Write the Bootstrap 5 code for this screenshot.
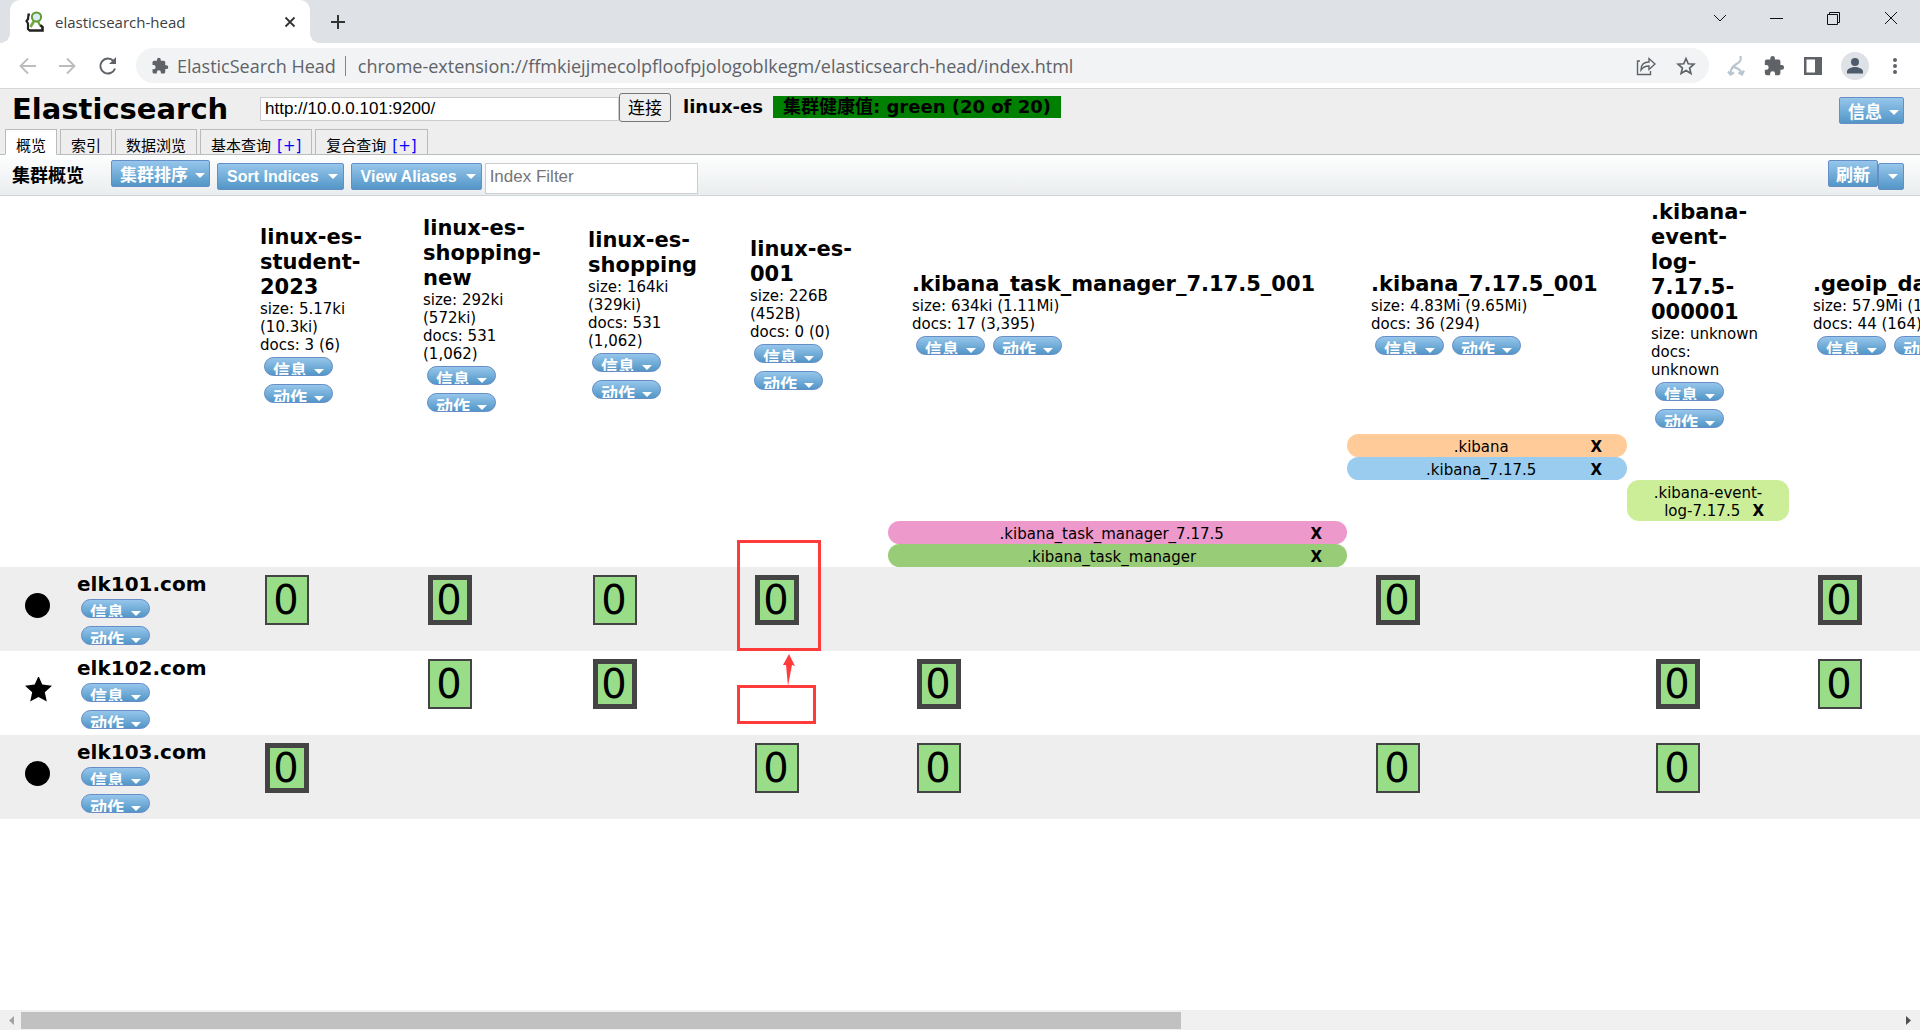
<!DOCTYPE html>
<html lang="zh-CN">
<head>
<meta charset="utf-8">
<meta name="viewport" content="width=device-width, initial-scale=1">
<title>elasticsearch-head</title>
<link href="https://cdn.jsdelivr.net/npm/bootstrap@5.3.0/dist/css/bootstrap.min.css" rel="stylesheet">
<style>
  body { font-family: "DejaVu Sans", "Noto Sans CJK SC", sans-serif; font-size: 15px; line-height: 18px; color: #000; background: #fff; overflow: hidden; }
  svg { display: block; flex: none; }
  .chrome-font { font-family: "Open Sans", "Noto Sans CJK SC", sans-serif; }
  .icon-btn { background: none; border: 0; padding: 0; color: #5f6368; display: flex; }

  /* browser frame */
  .tabstrip { background: #dee1e6; height: 43px; padding-left: 10px; }
  .browser-tab { position: relative; width: 300px; height: 43px; background: #fff; border-radius: 10px 10px 0 0; padding: 0 13px 0 15px; color: #3c4043; font-size: 15px; }
  .browser-tab::before, .browser-tab::after { content: ""; position: absolute; bottom: 0; width: 10px; height: 10px; }
  .browser-tab::before { right: 100%; background: radial-gradient(circle at 0 0, transparent 10px, #fff 10px); }
  .browser-tab::after { left: 100%; background: radial-gradient(circle at 100% 0, transparent 10px, #fff 10px); }
  .browser-tab svg { margin-right: 10px; }
  .browser-tab .icon-btn svg { margin: 0; }
  .win-buttons { gap: 41px; padding-right: 21px; }
  .win-buttons .icon-btn { color: #111; }
  .addressbar { height: 46px; padding: 5px 17px 5px 18px; border-bottom: 1px solid #d5d7da; gap: 18px; }
  .nav-icons { gap: 20px; }
  .omnibox { background: #f1f3f4; border-radius: 18px; height: 35px; padding: 0 13px 0 15px; color: #5f6368; font-size: 18px; }
  .omnibox .sep { width: 1px; height: 20px; background: #80868b; margin: 0 12px 0 9px; }
  .avatar { width: 28px; height: 28px; border-radius: 50%; background: #dee1e6; overflow: hidden; }

  /* page header */
  .page-head { background: #eee; border-bottom: 1px solid #bbb; height: 66px; }
  .page-head h1 { font-size: 29px; line-height: 36px; font-weight: bold; margin: 0; padding: 2px 0 0 12px; width: 260px; }
  .uri-box { width: 359px; height: 24px; border: 1px solid #ccc; padding: 1px 4px; font: 17px/20px "Liberation Sans", sans-serif; color: #000; background: #fff; }
  .connect { height: 29px; border: 1px solid #767676; border-radius: 3px; background: #efefef; padding: 0 8px; font-size: 17px; line-height: 20px; color: #000; }
  .cluster-name, .health { font-size: 18px; font-weight: bold; line-height: 22px; margin-top: 7px; }
  .cluster-name { margin-left: 12px; }
  .health { background: green; padding: 0 10px; margin-left: 10px; }
  .view-tabs { padding-left: 5px; gap: 3px; margin-bottom: -1px; }
  .view-tabs .tab-item { border: 1px solid #bbb; background: #eee; padding: 4px 10px 0; height: 26px; font-size: 15px; line-height: 24px; overflow: hidden; display: flex; gap: 6px; }
  .view-tabs .tab-item.current { background: #fff; border-bottom-color: #fff; }
  .view-tabs a { color: #000; text-decoration: none; }
  .view-tabs a.plus { color: #00f; }

  /* blue buttons */
  .ui-btn { border: 1px solid #668dc6; border-radius: 2px; color: #fff; font: bold 17px/22px "Liberation Sans", "Noto Sans CJK SC", sans-serif; background: linear-gradient(#96c6eb, #5296c7); height: 27px; padding: 4px 8px 0; display: inline-flex; align-items: center; gap: 7px; white-space: nowrap; overflow: hidden; }
  .ui-btn::after { content: ""; flex: none; border: 5px solid transparent; border-top-color: #fff; border-bottom: 0; margin-right: -4px; }
  .ui-btn.latin { font-size: 16px; gap: 9px; padding: 0 9px; margin-left: 7px; }
  .ui-btn.no-caret { padding: 4px 7px 0; }
  .ui-btn.no-caret::after { display: none; }
  .ui-btn.only-caret { padding: 0 9px; width: 26px; }
  .ui-btn.only-caret::after { margin: 0; }
  .ui-btn.pill { border-radius: 10px; width: 69px; height: 19px; padding: 10px 14px 0 8px; line-height: 17px; margin: 3px 4px 5px; }

  .toolbar { height: 41px; border-bottom: 1px solid #ced5d9; background: linear-gradient(#fdfefe, #eaedef); padding: 5px 16px 0 12px; }
  .toolbar h2 { font-size: 18px; line-height: 32px; font-weight: bold; margin: 0; width: 99px; }
  .lower { margin-top: 3px; }
  .filter { width: 213px; height: 31px; border: 1px solid #ccc; padding: 0 4px 4px; font: 17px/20px "Liberation Sans", sans-serif; margin-left: 3px; }
  .filter::placeholder { color: #757575; }

  /* cluster grid */
  .grid-wrap { overflow: hidden; }
  .cluster { table-layout: fixed; width: 2200px; border-collapse: collapse; }
  .cluster th, .cluster td { padding: 0; font-weight: normal; text-align: left; }
  .cluster .idx { padding: 2px 24px 0; vertical-align: middle; height: 238px; white-space: nowrap; }
  .cluster .narrow { white-space: normal; padding-right: 27px; }
  .idx h3, .node-name { font-size: 20px; line-height: 25px; font-weight: bold; margin: 0; }
  .idx h3 { font-size: 21px; }
  .btn-set { display: flex; flex-wrap: wrap; }
  .alias { border-radius: 12px; padding: 4px 25px 1px; text-align: center; min-height: 23px; }
  .alias-x { float: right; border: 0; background: none; padding: 0; font-weight: bold; line-height: 18px; color: #000; }
  .a1 { background: #fc9; } .a2 { background: #9ce; } .a3 { background: #ce9; } .a4 { background: #e9c; } .a5 { background: #9c7; }
  .cluster tbody tr { height: 84px; }
  .cluster tbody tr:nth-child(odd) { background: #eee; }
  .cluster tbody td { vertical-align: top; padding: 8px 0 0 29px; }
  .cluster tbody .marker { padding: 26px 0 0 25px; }
  .cluster tbody .node { padding: 5px 0 0; }
  .node .btn-set { flex-direction: column; }
  .node .pill { margin: 2px 4px 6px; }
  .replica { width: 44px; height: 50px; border: 2px solid #444; background: #9d8; font-size: 40px; line-height: 46px; padding: 0 2px 0 0; display: flex; align-items: center; justify-content: center; color: #000; }
  .replica.primary { border-width: 5px; }

  /* red annotation marks lying over the grid */
  .note { position: absolute; border: 3px solid #ff3b3b; pointer-events: none; }
  .note-a { left: 737px; top: 344px; width: 84px; height: 111px; }
  .note-b { left: 737px; top: 489px; width: 79px; height: 39px; }
  .note-arrow { position: absolute; left: 783px; top: 458px; }

  .hscroll { height: 20px; background: #f0f0f0; padding: 0 9px; }
  .thumb { width: 61%; height: 17px; background: #c1c1c1; margin: 0 auto 0 7px; }
</style>
</head>
<body>
<div class="d-flex flex-column vh-100">
  <header class="chrome-font">
    <div class="tabstrip d-flex">
      <div class="browser-tab d-flex align-items-center">
        <svg width="20" height="22" viewBox="0 0 20 22" fill="none"><path d="M5 3.500H3.500L3 8l-1.500 2L3 12.500V18l1.500 1.500" stroke="#222" stroke-width="2.200"/><path d="M4 19.500h13.500V16l-2.500-2" stroke="#222" stroke-width="2.600"/><circle cx="11.500" cy="6" r="4.600" fill="#dcebfa" stroke="#5f9b32" stroke-width="2"/><path d="M9 10l-3.500 6" stroke="#6faa3c" stroke-width="2.600"/><path d="M13 10.500l2 4" stroke="#5f9b32" stroke-width="2"/></svg>
        <span class="flex-grow-1">elasticsearch-head</span>
        <button class="icon-btn" aria-label="Close tab"><svg width="14" height="14" viewBox="0 0 14 14"><path d="M2.500 2.500l9 9m0-9l-9 9" stroke="#333" stroke-width="1.800"/></svg></button>
      </div>
      <button class="icon-btn align-items-center ms-3 ps-1" aria-label="New tab"><svg width="16" height="16" viewBox="0 0 16 16"><path d="M8 1v14M1 8h14" stroke="#333" stroke-width="2"/></svg></button>
      <div class="win-buttons d-flex align-items-center ms-auto pb-2">
        <button class="icon-btn" aria-label="Search tabs"><svg width="16" height="16" viewBox="0 0 16 16"><path d="M2 5l6 6 6-6" fill="none" stroke="currentColor"/></svg></button>
        <button class="icon-btn" aria-label="Minimize"><svg width="16" height="16" viewBox="0 0 16 16"><path d="M1 8.500h13" stroke="currentColor"/></svg></button>
        <button class="icon-btn" aria-label="Restore"><svg width="16" height="16" viewBox="0 0 16 16"><path d="M1.500 4.500h10v10h-10zM3.500 4V2.500h10v10H12" fill="none" stroke="currentColor"/></svg></button>
        <button class="icon-btn" aria-label="Close"><svg width="16" height="16" viewBox="0 0 16 16"><path d="M2 2l12 12m0-12L2 14" stroke="currentColor"/></svg></button>
      </div>
    </div>
    <div class="addressbar d-flex align-items-center">
      <div class="nav-icons d-flex">
        <button class="icon-btn" aria-label="Back"><svg width="20" height="20" viewBox="0 0 20 20"><path d="M18 10H2.500M10 2.500L2.500 10l7.500 7.500" fill="none" stroke="#babcbe" stroke-width="1.800"/></svg></button>
        <button class="icon-btn" aria-label="Forward"><svg width="20" height="20" viewBox="0 0 20 20"><path d="M1 10h15.500M9 2.500l7.500 7.500L9 17.500" fill="none" stroke="#babcbe" stroke-width="1.800"/></svg></button>
        <button class="icon-btn" aria-label="Reload"><svg width="20" height="20" viewBox="0 0 20 20"><path d="M17 12.500A7.500 7.500 0 1 1 15.500 5" fill="none" stroke="#5f6368" stroke-width="2"/><path d="M18 1v7h-7z" fill="#5f6368"/></svg></button>
      </div>
      <div class="omnibox d-flex align-items-center flex-grow-1">
        <svg class="me-2" width="18" height="18" viewBox="0 0 24 24"><path d="M20.500 11H19V7a2 2 0 0 0-2-2h-4V3.500a2.500 2.500 0 0 0-5 0V5H4a2 2 0 0 0-2 2v3.800h1.500a2.700 2.700 0 0 1 0 5.400H2V20a2 2 0 0 0 2 2h3.800v-1.500a2.700 2.700 0 0 1 5.400 0V22H17a2 2 0 0 0 2-2v-4h1.500a2.500 2.500 0 0 0 0-5z" fill="#5f6368"/></svg>
        <span>ElasticSearch Head</span><span class="sep"></span><span class="flex-grow-1">chrome-extension://ffmkiejjmecolpfloofpjologoblkegm/elasticsearch-head/index.html</span>
        <button class="icon-btn me-3 pe-1" aria-label="Share"><svg width="20" height="20" viewBox="0 0 20 20" fill="none" stroke="#5f6368" stroke-width="1.400"><path d="M4 5H1.500v13.500h13V15"/><path d="M5 14c0-5 3-8 8-8V2.500l6 5.500-6 5.500V10c-4 0-6 1-8 4z"/></svg></button>
        <button class="icon-btn" aria-label="Bookmark"><svg width="20" height="20" viewBox="0 0 24 24"><path d="M12 3l2.700 6.300 6.800.6-5.200 4.500 1.600 6.700-5.900-3.600-5.900 3.600 1.600-6.700-5.200-4.500 6.800-.6z" fill="none" stroke="#5f6368" stroke-width="2"/></svg></button>
      </div>
      <button class="icon-btn" aria-label="Extension"><svg width="18" height="22" viewBox="0 0 18 22" fill="none" stroke="#b9c6d2" stroke-width="2.200"><path d="M13.500 1c1 5-1 6-4 8s-6 4-6 10M6 12c5 1 8 3 9 7"/><path d="M1 16.500l2.500 3 3.500-2M11.500 17.500l3.500 2 2-4"/></svg></button>
      <button class="icon-btn" aria-label="Extensions"><svg width="22" height="22" viewBox="0 0 24 24"><path d="M20.500 11H19V7a2 2 0 0 0-2-2h-4V3.500a2.500 2.500 0 0 0-5 0V5H4a2 2 0 0 0-2 2v3.800h1.500a2.700 2.700 0 0 1 0 5.400H2V20a2 2 0 0 0 2 2h3.800v-1.500a2.700 2.700 0 0 1 5.400 0V22H17a2 2 0 0 0 2-2v-4h1.500a2.500 2.500 0 0 0 0-5z" fill="#5f6368"/></svg></button>
      <button class="icon-btn" aria-label="Side panel"><svg width="20" height="20" viewBox="0 0 20 20"><path d="M1 1h18v18H1zM3.500 3.500v13h8.500v-13z" fill="#5f6368" fill-rule="evenodd"/></svg></button>
      <button class="icon-btn avatar" aria-label="Profile"><svg width="28" height="28" viewBox="0 0 28 28" fill="#4d5b6c"><circle cx="14" cy="10" r="4"/><path d="M6 21.500v-2c0-3 5-4.500 8-4.500s8 1.500 8 4.500v2z"/></svg></button>
      <button class="icon-btn" aria-label="Menu"><svg width="16" height="18" viewBox="0 0 16 18" fill="#5f6368"><circle cx="8" cy="3" r="2"/><circle cx="8" cy="9" r="2"/><circle cx="8" cy="15" r="2"/></svg></button>
    </div>
  </header>

  <section class="page-head d-flex flex-column justify-content-between">
    <div class="d-flex align-items-start pe-3">
      <h1>Elasticsearch</h1>
      <form class="d-flex align-items-start pt-1" onsubmit="return false">
        <input class="uri-box mt-1" type="text" value="http://10.0.0.101:9200/" aria-label="URI">
        <button class="connect" type="submit">连接</button>
      </form>
      <span class="cluster-name">linux-es</span>
      <span class="health">集群健康值: green (20 of 20)</span>
      <button class="ui-btn ms-auto mt-2">信息</button>
    </div>
    <nav class="view-tabs d-flex">
      <div class="tab-item current"><a href="#">概览</a></div>
      <div class="tab-item"><a href="#">索引</a></div>
      <div class="tab-item"><a href="#">数据浏览</a></div>
      <div class="tab-item"><a href="#">基本查询</a><a class="plus" href="#">[+]</a></div>
      <div class="tab-item"><a href="#">复合查询</a><a class="plus" href="#">[+]</a></div>
    </nav>
  </section>

  <section class="toolbar d-flex align-items-start">
    <h2>集群概览</h2>
    <button class="ui-btn">集群排序</button>
    <button class="ui-btn latin lower">Sort Indices</button>
    <button class="ui-btn latin lower">View Aliases</button>
    <input class="filter lower" type="text" placeholder="Index Filter" aria-label="Index Filter">
    <button class="ui-btn no-caret ms-auto">刷新</button>
    <button class="ui-btn only-caret lower" aria-label="刷新选项"></button>
  </section>

  <main class="grid-wrap flex-grow-1 position-relative">
    <table class="cluster">
      <colgroup>
        <col style="width:77px"><col style="width:159px"><col style="width:163px"><col style="width:165px"><col style="width:162px"><col style="width:162px"><col style="width:459px"><col style="width:280px"><col style="width:162px"><col>
      </colgroup>
      <thead>
        <tr>
          <th colspan="2"></th>
          <th class="idx narrow"><h3>linux-es-student-2023</h3><div>size: 5.17ki (10.3ki)</div><div>docs: 3 (6)</div><div class="btn-set"><button class="ui-btn pill">信息</button><button class="ui-btn pill">动作</button></div></th>
          <th class="idx narrow"><h3>linux-es-shopping-new</h3><div>size: 292ki (572ki)</div><div>docs: 531 (1,062)</div><div class="btn-set"><button class="ui-btn pill">信息</button><button class="ui-btn pill">动作</button></div></th>
          <th class="idx narrow"><h3>linux-es-shopping</h3><div>size: 164ki (329ki)</div><div>docs: 531 (1,062)</div><div class="btn-set"><button class="ui-btn pill">信息</button><button class="ui-btn pill">动作</button></div></th>
          <th class="idx narrow"><h3>linux-es-001</h3><div>size: 226B (452B)</div><div>docs: 0 (0)</div><div class="btn-set"><button class="ui-btn pill">信息</button><button class="ui-btn pill">动作</button></div></th>
          <th class="idx"><h3>.kibana_task_manager_7.17.5_001</h3><div>size: 634ki (1.11Mi)</div><div>docs: 17 (3,395)</div><div class="btn-set"><button class="ui-btn pill">信息</button><button class="ui-btn pill">动作</button></div></th>
          <th class="idx"><h3>.kibana_7.17.5_001</h3><div>size: 4.83Mi (9.65Mi)</div><div>docs: 36 (294)</div><div class="btn-set"><button class="ui-btn pill">信息</button><button class="ui-btn pill">动作</button></div></th>
          <th class="idx narrow"><h3>.kibana-event-log-7.17.5-000001</h3><div>size: unknown</div><div>docs: unknown</div><div class="btn-set"><button class="ui-btn pill">信息</button><button class="ui-btn pill">动作</button></div></th>
          <th class="idx"><h3>.geoip_databases</h3><div>size: 57.9Mi (116Mi)</div><div>docs: 44 (164)</div><div class="btn-set"><button class="ui-btn pill">信息</button><button class="ui-btn pill">动作</button></div></th>
        </tr>
        <tr><th colspan="7"></th><th><div class="alias a1"><button class="alias-x">X</button>.kibana</div></th><th colspan="2"></th></tr>
        <tr><th colspan="7"></th><th><div class="alias a2"><button class="alias-x">X</button>.kibana_7.17.5</div></th><th colspan="2"></th></tr>
        <tr><th colspan="8"></th><th><div class="alias a3">.kibana-event-log-7.17.5<button class="alias-x">X</button></div></th><th></th></tr>
        <tr><th colspan="6"></th><th><div class="alias a4"><button class="alias-x">X</button>.kibana_task_manager_7.17.5</div></th><th colspan="3"></th></tr>
        <tr><th colspan="6"></th><th><div class="alias a5"><button class="alias-x">X</button>.kibana_task_manager</div></th><th colspan="3"></th></tr>
      </thead>
      <tbody>
        <tr>
          <td class="marker"><svg width="26" height="26" viewBox="0 0 26 26"><circle cx="12.500" cy="12.500" r="12.500"/></svg></td>
          <td class="node"><div class="node-name">elk101.com</div><div class="btn-set"><button class="ui-btn pill">信息</button><button class="ui-btn pill">动作</button></div></td>
          <td><button class="replica">0</button></td><td><button class="replica primary">0</button></td><td><button class="replica">0</button></td><td><button class="replica primary">0</button></td><td></td><td><button class="replica primary">0</button></td><td></td><td><button class="replica primary">0</button></td>
        </tr>
        <tr>
          <td class="marker"><svg width="28" height="26" viewBox="0 1 28 26"><path d="M13.500 0l3.800 8.500 9.700 1.200-7.200 6.500 2 9.300-8.300-4.500-8.300 4.500 2-9.300L0 9.700l9.700-1.200z"/></svg></td>
          <td class="node"><div class="node-name">elk102.com</div><div class="btn-set"><button class="ui-btn pill">信息</button><button class="ui-btn pill">动作</button></div></td>
          <td></td><td><button class="replica">0</button></td><td><button class="replica primary">0</button></td><td></td><td><button class="replica primary">0</button></td><td></td><td><button class="replica primary">0</button></td><td><button class="replica">0</button></td>
        </tr>
        <tr>
          <td class="marker"><svg width="26" height="26" viewBox="0 0 26 26"><circle cx="12.500" cy="12.500" r="12.500"/></svg></td>
          <td class="node"><div class="node-name">elk103.com</div><div class="btn-set"><button class="ui-btn pill">信息</button><button class="ui-btn pill">动作</button></div></td>
          <td><button class="replica primary">0</button></td><td></td><td></td><td><button class="replica">0</button></td><td><button class="replica">0</button></td><td><button class="replica">0</button></td><td><button class="replica">0</button></td><td></td>
        </tr>
      </tbody>
    </table>
    <div class="note note-a"></div>
    <div class="note note-b"></div>
    <svg class="note-arrow" width="12" height="32" viewBox="0 0 12 32"><path d="M6 0l6 12-3-1-4 21-2-21-3 0z" fill="#ff3b3b"/></svg>
  </main>

  <footer class="hscroll d-flex align-items-center">
    <svg width="5" height="9" viewBox="0 0 5 9"><path d="M5 0v9L0 4.500z" fill="#a3a3a3"/></svg>
    <div class="thumb"></div>
    <svg width="5" height="9" viewBox="0 0 5 9"><path d="M0 0v9l5-4.500z" fill="#505050"/></svg>
  </footer>
</div>
<script src="https://cdn.jsdelivr.net/npm/bootstrap@5.3.0/dist/js/bootstrap.bundle.min.js"></script>
</body>
</html>
